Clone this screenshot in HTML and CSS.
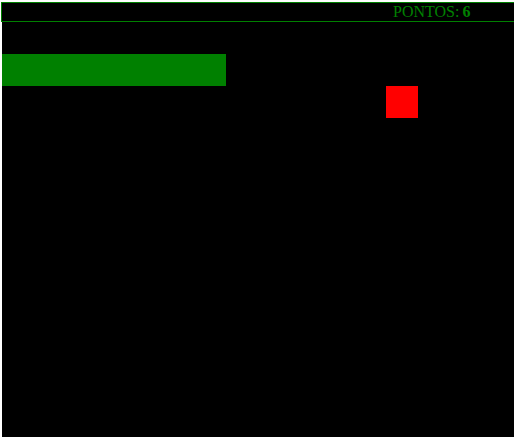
FILE: index.html
```html
<!DOCTYPE html>
<html>
<head>
<meta charset="utf-8">
<link rel="stylesheet" href="styles.css">
</head>
<body>
<div class="header"><span class="label">PONTOS:</span><b class="score">6</b></div>
<div class="board">
  <div class="snake"></div>
  <div class="food"></div>
</div>
</body>
</html>
```
FILE: styles.css
```css
html, body {
  margin: 0;
  padding: 0;
  background: #fff;
  overflow: hidden;
}
body {
  width: 514px;
  height: 437px;
}
.header {
  margin: 2px 0 0 1px;
  width: 513px;
  height: 20px;
  border: 1px solid #008000;
  border-right: 0;
  background: #000;
  color: #008000;
  font-family: "Liberation Serif", serif;
  font-size: 16px;
  line-height: 18px;
  padding-left: 391px;
  box-sizing: border-box;
  white-space: nowrap;
}
.score {
  font-weight: bold;
  margin-left: 3px;
}
.board {
  margin-left: 2px;
  width: 512px;
  height: 415px;
  background: #000;
  display: grid;
  grid-template-columns: repeat(16, 32px);
  grid-template-rows: repeat(13, 32px);
  overflow: hidden;
}
.snake {
  grid-row: 2;
  grid-column: 1 / 8;
  background: #008000;
}
.food {
  grid-row: 3;
  grid-column: 13;
  background: #ff0000;
}
```
